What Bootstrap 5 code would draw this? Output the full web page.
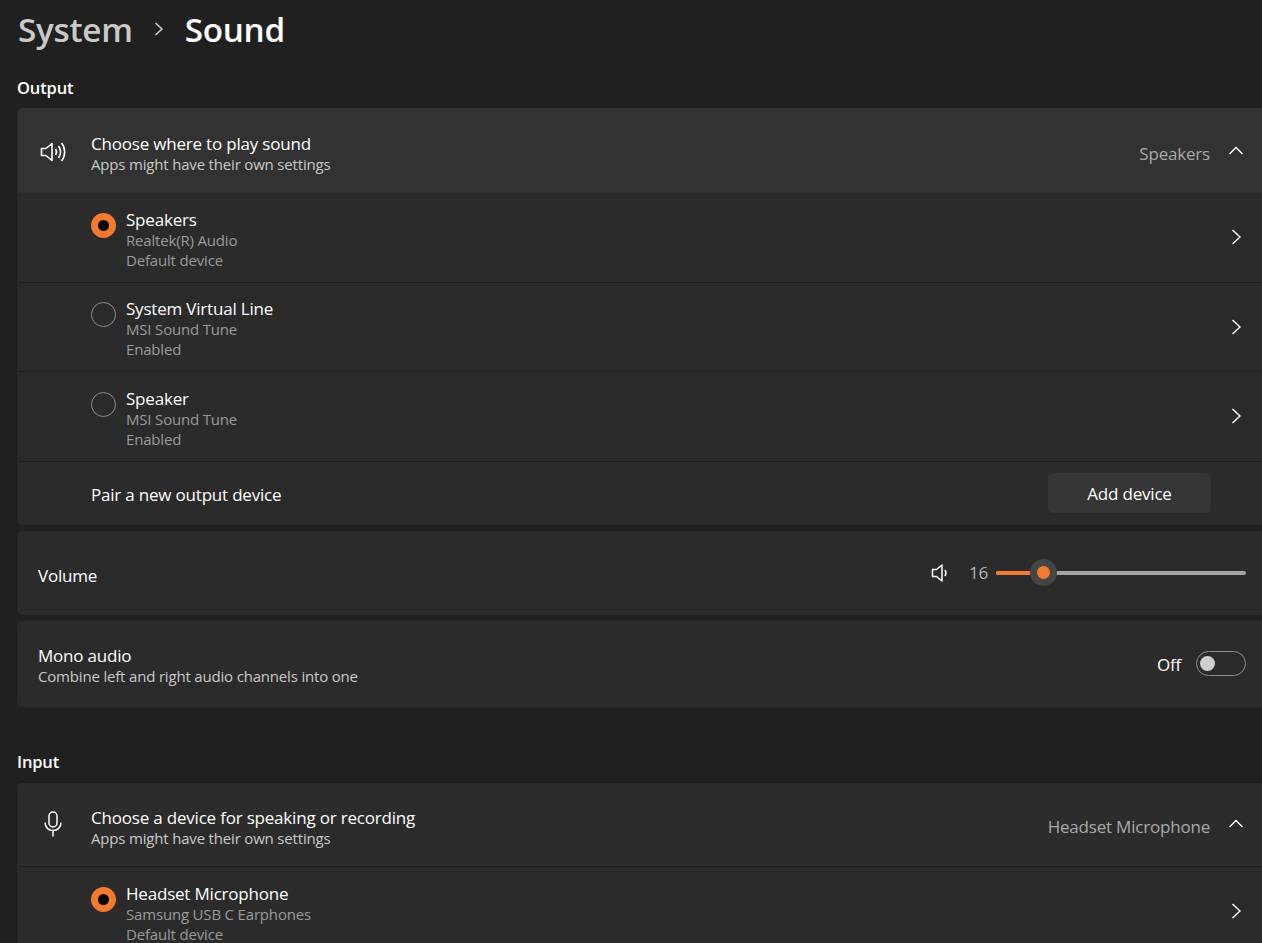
<!doctype html>
<html lang="en"><head><meta charset="utf-8"><title>Sound</title>
<link href="https://cdn.jsdelivr.net/npm/bootstrap@5.3.0/dist/css/bootstrap.min.css" rel="stylesheet">
<style>
html,body{height:943px;overflow:hidden;background:#202020}
body{font-family:"Open Sans","Noto Sans",sans-serif;color:#fff;font-size:15.5px}
.page-wrap{padding-left:17px}
.crumbs{height:60px;margin-left:1px;font-size:33.3px;font-weight:600;line-height:58px;letter-spacing:-.3px}
.crumbs>span{margin-top:-2px}
.crumb-parent{color:#c9c9c9}
.crumb-sep{width:52px}
.sec-label{font-size:16.5px;font-weight:600;line-height:22px;height:22px;color:#fff;letter-spacing:-.15px}
.output-label{margin-top:17px;margin-bottom:9px}
.input-label{margin-top:44px;margin-bottom:10px}
.panel{background:#2b2b2b;border-radius:5px 0 0 5px;border:0;margin-bottom:6px;overflow:hidden;border-left:1px solid #282828}
.row-item{display:flex;align-items:center;padding-right:16px;border-bottom:1px solid #1d1d1d}
.row-item:last-child{border-bottom:0}
.head-row{height:85px;background:#323232;border-bottom:0}
.head-row.plain{background:#2c2c2c;height:84px;border-bottom:1px solid #1d1d1d}
.device-row{height:89.5px;padding-left:73px}
.pair-row{height:63px;padding-left:73px}
.volume-row{height:84px;padding-left:20px}
.mono-row{height:86px;padding-left:20px}
.icon-cell{width:73px;flex:none;display:flex;justify-content:center}
.shift-head{padding-top:6px}
.shift-dev{padding-top:4px}
.shift-one{padding-top:2px}
.shift-vol{padding-top:5px}
.t-main{font-size:17px;line-height:21px;letter-spacing:-.2px;color:#fff}
.t-sub{font-size:15px;line-height:20px;letter-spacing:-.18px;color:#c8c8c8}
.t-mute{font-size:15px;line-height:20px;letter-spacing:-.18px;color:#9a9a9a}
.t-val{font-size:17px;color:#a9a9a9;letter-spacing:-.2px;padding-top:6px}
.vol-num{width:24px;margin-right:8px;padding-top:0;color:#b4b4b4}
.chev{width:20px;flex:none;margin-left:16px}
.radio-on,.radio-off{width:25px;height:25px;border-radius:50%;flex:none;margin-right:10px;margin-top:-24px}
.radio-on{background:#000;border:7px solid #f5792f}
.radio-off{border:1.5px solid #8c8c8c}
.add-btn{width:163px;height:40px;background:#363636;color:#fff;border:1px solid #353535;border-radius:5px;font-size:17px;letter-spacing:-.2px;padding:1px 0 0;margin-right:35px}
.add-btn:hover{background:#363636;color:#fff}
.slider-track{width:250px;height:4px;background:#a3a3a3;border-radius:2px;position:relative}
.slider-fill{height:4px;background:#f5792f;border-radius:2px 0 0 2px}
.slider-thumb{position:absolute;width:27px;height:27px;left:34px;top:-11.5px;border-radius:50%;background:#454545;display:flex;align-items:center;justify-content:center}
.slider-thumb span{width:13px;height:13px;border-radius:50%;background:#f5792f;display:block}
.toggle-track{width:50px;height:25px;border:1.5px solid #8c8c8c;border-radius:13px;position:relative;margin-left:15px}
.toggle-knob{position:absolute;width:15px;height:15px;left:3px;top:3.5px;border-radius:50%;background:#cfcfcf}
.mic-ico{margin-right:4px}
.spk-ico{margin-right:2px;margin-top:2px}
.vol-ico{margin-right:14px;margin-left:2px}
</style></head>
<body>
<main class="page-wrap">
  <div class="crumbs d-flex align-items-center">
    <span class="crumb-parent">System</span>
    <span class="crumb-sep d-flex justify-content-center"><svg width="14" height="18" viewBox="0 0 14 18" fill="none" stroke="#c9c9c9" stroke-width="1.600"><path d="M3.500 3 10 9l-6.500 6"/></svg></span>
    <span>Sound</span>
  </div>

  <div class="sec-label output-label">Output</div>
  <section class="panel">
    <div class="row-item head-row">
      <div class="icon-cell"><svg class="spk-ico" width="28" height="26" viewBox="0 0 28 26" fill="none" stroke="#fff" stroke-width="1.600"><path d="M1.500 9.500h4.500L12 4.500v17l-6-5H1.500z" stroke-linejoin="round"/><path d="M15.500 10c1.300 1.900 1.300 4.100 0 6"/><path d="M18.500 7c2.700 3.500 2.700 8.500 0 12"/><path d="M21.500 4c4.200 5 4.200 13 0 18"/></svg></div>
      <div class="flex-grow-1 shift-head"><div class="t-main">Choose where to play sound</div><div class="t-sub">Apps might have their own settings</div></div>
      <span class="t-val">Speakers</span>
      <svg class="chev" height="12" viewBox="0 0 20 12" fill="none" stroke="#fff" stroke-width="1.400"><path d="M3.500 9 10 2.500 16.500 9"/></svg>
    </div>
    <div class="row-item device-row">
      <span class="radio-on"></span>
      <div class="flex-grow-1 shift-dev"><div class="t-main">Speakers</div><div class="t-mute">Realtek(R) Audio</div><div class="t-mute">Default device</div></div>
      <svg class="chev" height="20" viewBox="0 0 20 20" fill="none" stroke="#fff" stroke-width="1.400"><path d="M6.500 3 14 10l-7.500 7"/></svg>
    </div>
    <div class="row-item device-row">
      <span class="radio-off"></span>
      <div class="flex-grow-1 shift-dev"><div class="t-main">System Virtual Line</div><div class="t-mute">MSI Sound Tune</div><div class="t-mute">Enabled</div></div>
      <svg class="chev" height="20" viewBox="0 0 20 20" fill="none" stroke="#fff" stroke-width="1.400"><path d="M6.500 3 14 10l-7.500 7"/></svg>
    </div>
    <div class="row-item device-row">
      <span class="radio-off"></span>
      <div class="flex-grow-1 shift-dev"><div class="t-main">Speaker</div><div class="t-mute">MSI Sound Tune</div><div class="t-mute">Enabled</div></div>
      <svg class="chev" height="20" viewBox="0 0 20 20" fill="none" stroke="#fff" stroke-width="1.400"><path d="M6.500 3 14 10l-7.500 7"/></svg>
    </div>
    <div class="row-item pair-row">
      <div class="flex-grow-1 t-main shift-one">Pair a new output device</div>
      <button type="button" class="btn add-btn">Add device</button>
    </div>
  </section>

  <section class="panel">
    <div class="row-item volume-row">
      <div class="flex-grow-1 t-main shift-vol">Volume</div>
      <svg class="vol-ico" width="20" height="22" viewBox="0 0 20 22" fill="none" stroke="#fff" stroke-width="1.500"><path d="M2.500 7.500h4L12 3v16l-5.500-4.500h-4z" stroke-linejoin="round"/><path d="M15 8c1.300 2 1.300 4 0 6"/></svg>
      <span class="t-val vol-num text-end">16</span>
      <div class="slider-track"><div class="slider-fill" style="width:15.2%"></div><div class="slider-thumb"><span></span></div></div>
    </div>
  </section>

  <section class="panel">
    <div class="row-item mono-row">
      <div class="flex-grow-1 shift-dev"><div class="t-main">Mono audio</div><div class="t-sub">Combine left and right audio channels into one</div></div>
      <span class="t-main shift-one">Off</span>
      <div class="toggle-track"><span class="toggle-knob"></span></div>
    </div>
  </section>

  <div class="sec-label input-label">Input</div>
  <section class="panel">
    <div class="row-item head-row plain">
      <div class="icon-cell"><svg class="mic-ico" width="20" height="28" viewBox="0 0 20 28" fill="none" stroke="#fff" stroke-width="1.500"><rect x="6" y="2" width="8" height="15" rx="4"/><path d="M2 12.500c0 5 3.600 8 8 8s8-3 8-8M10 20.500v6"/></svg></div>
      <div class="flex-grow-1 shift-head"><div class="t-main">Choose a device for speaking or recording</div><div class="t-sub">Apps might have their own settings</div></div>
      <span class="t-val">Headset Microphone</span>
      <svg class="chev" height="12" viewBox="0 0 20 12" fill="none" stroke="#fff" stroke-width="1.400"><path d="M3.500 9 10 2.500 16.500 9"/></svg>
    </div>
    <div class="row-item device-row">
      <span class="radio-on"></span>
      <div class="flex-grow-1 shift-dev"><div class="t-main">Headset Microphone</div><div class="t-mute">Samsung USB C Earphones</div><div class="t-mute">Default device</div></div>
      <svg class="chev" height="20" viewBox="0 0 20 20" fill="none" stroke="#fff" stroke-width="1.400"><path d="M6.500 3 14 10l-7.500 7"/></svg>
    </div>
  </section>
</main>
<script src="https://cdn.jsdelivr.net/npm/bootstrap@5.3.0/dist/js/bootstrap.bundle.min.js"></script>
</body></html>
